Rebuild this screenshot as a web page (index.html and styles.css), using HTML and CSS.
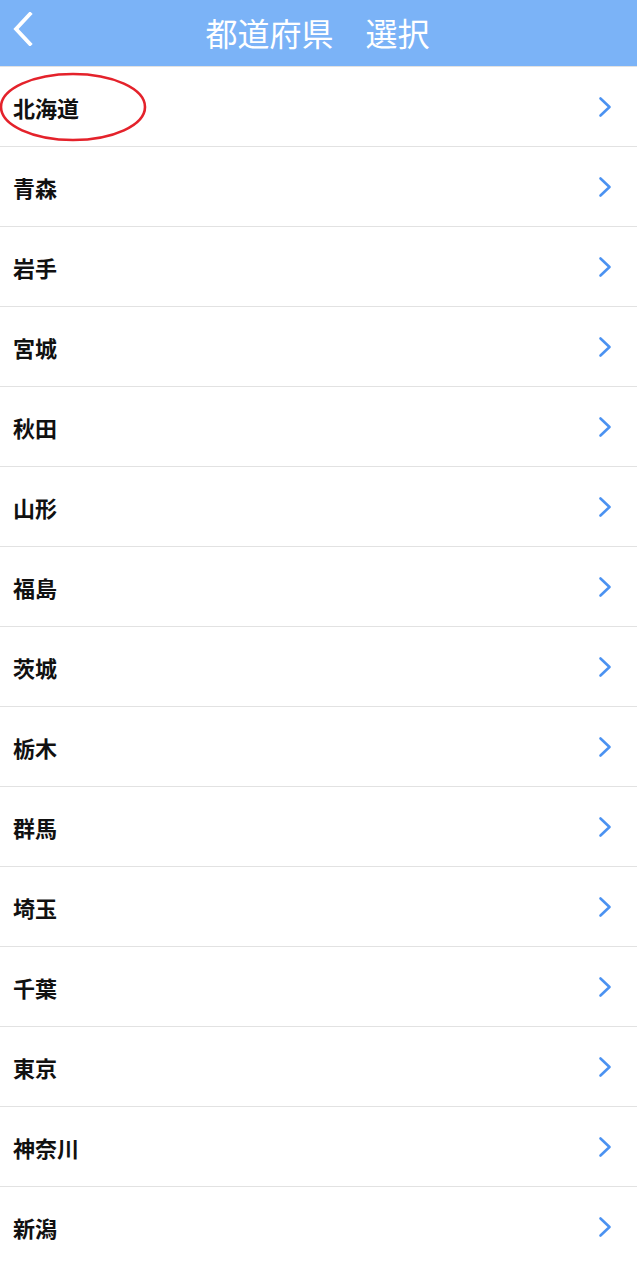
FILE: index.html
```html
<!DOCTYPE html>
<html lang="ja">
<head>
  <meta charset="UTF-8">
  <meta name="viewport" content="width=device-width, initial-scale=1.0">
  <title>都道府県選択</title>
  <link rel="stylesheet" href="styles.css">
</head>
<body>

  <!-- Header -->
  <header class="topbar">
    <a class="back" href="#">
      <svg width="22" height="34" viewBox="0 0 22 34"><path d="M18 2 L4 17 L18 32" fill="none" stroke="#fff" stroke-width="3.8" stroke-linecap="square"/></svg>
    </a>
    <h1>都道府県　選択</h1>
  </header>

  <!-- Prefecture list -->
  <ul class="pref-list">
    <li><span>北海道</span><svg class="chev" width="14" height="22" viewBox="0 0 14 22"><path d="M2.5 2.5 L11.5 11 L2.5 19.5" fill="none" stroke="#4b92f1" stroke-width="2.6" stroke-linecap="round" stroke-linejoin="round"/></svg>
      <svg class="circle" width="150" height="72" viewBox="0 0 150 72"><ellipse cx="74" cy="36" rx="72" ry="33" fill="none" stroke="#e4222b" stroke-width="2.6"/></svg>
    </li>
    <li><span>青森</span><svg class="chev" width="14" height="22" viewBox="0 0 14 22"><path d="M2.5 2.5 L11.5 11 L2.5 19.5" fill="none" stroke="#4b92f1" stroke-width="2.6" stroke-linecap="round" stroke-linejoin="round"/></svg></li>
    <li><span>岩手</span><svg class="chev" width="14" height="22" viewBox="0 0 14 22"><path d="M2.5 2.5 L11.5 11 L2.5 19.5" fill="none" stroke="#4b92f1" stroke-width="2.6" stroke-linecap="round" stroke-linejoin="round"/></svg></li>
    <li><span>宮城</span><svg class="chev" width="14" height="22" viewBox="0 0 14 22"><path d="M2.5 2.5 L11.5 11 L2.5 19.5" fill="none" stroke="#4b92f1" stroke-width="2.6" stroke-linecap="round" stroke-linejoin="round"/></svg></li>
    <li><span>秋田</span><svg class="chev" width="14" height="22" viewBox="0 0 14 22"><path d="M2.5 2.5 L11.5 11 L2.5 19.5" fill="none" stroke="#4b92f1" stroke-width="2.6" stroke-linecap="round" stroke-linejoin="round"/></svg></li>
    <li><span>山形</span><svg class="chev" width="14" height="22" viewBox="0 0 14 22"><path d="M2.5 2.5 L11.5 11 L2.5 19.5" fill="none" stroke="#4b92f1" stroke-width="2.6" stroke-linecap="round" stroke-linejoin="round"/></svg></li>
    <li><span>福島</span><svg class="chev" width="14" height="22" viewBox="0 0 14 22"><path d="M2.5 2.5 L11.5 11 L2.5 19.5" fill="none" stroke="#4b92f1" stroke-width="2.6" stroke-linecap="round" stroke-linejoin="round"/></svg></li>
    <li><span>茨城</span><svg class="chev" width="14" height="22" viewBox="0 0 14 22"><path d="M2.5 2.5 L11.5 11 L2.5 19.5" fill="none" stroke="#4b92f1" stroke-width="2.6" stroke-linecap="round" stroke-linejoin="round"/></svg></li>
    <li><span>栃木</span><svg class="chev" width="14" height="22" viewBox="0 0 14 22"><path d="M2.5 2.5 L11.5 11 L2.5 19.5" fill="none" stroke="#4b92f1" stroke-width="2.6" stroke-linecap="round" stroke-linejoin="round"/></svg></li>
    <li><span>群馬</span><svg class="chev" width="14" height="22" viewBox="0 0 14 22"><path d="M2.5 2.5 L11.5 11 L2.5 19.5" fill="none" stroke="#4b92f1" stroke-width="2.6" stroke-linecap="round" stroke-linejoin="round"/></svg></li>
    <li><span>埼玉</span><svg class="chev" width="14" height="22" viewBox="0 0 14 22"><path d="M2.5 2.5 L11.5 11 L2.5 19.5" fill="none" stroke="#4b92f1" stroke-width="2.6" stroke-linecap="round" stroke-linejoin="round"/></svg></li>
    <li><span>千葉</span><svg class="chev" width="14" height="22" viewBox="0 0 14 22"><path d="M2.5 2.5 L11.5 11 L2.5 19.5" fill="none" stroke="#4b92f1" stroke-width="2.6" stroke-linecap="round" stroke-linejoin="round"/></svg></li>
    <li><span>東京</span><svg class="chev" width="14" height="22" viewBox="0 0 14 22"><path d="M2.5 2.5 L11.5 11 L2.5 19.5" fill="none" stroke="#4b92f1" stroke-width="2.6" stroke-linecap="round" stroke-linejoin="round"/></svg></li>
    <li><span>神奈川</span><svg class="chev" width="14" height="22" viewBox="0 0 14 22"><path d="M2.5 2.5 L11.5 11 L2.5 19.5" fill="none" stroke="#4b92f1" stroke-width="2.6" stroke-linecap="round" stroke-linejoin="round"/></svg></li>
    <li><span>新潟</span><svg class="chev" width="14" height="22" viewBox="0 0 14 22"><path d="M2.5 2.5 L11.5 11 L2.5 19.5" fill="none" stroke="#4b92f1" stroke-width="2.6" stroke-linecap="round" stroke-linejoin="round"/></svg></li>
  </ul>

</body>
</html>
```

FILE: styles.css
```css
body { margin: 0; padding: 0; background-color: #fff; font-family: "Noto Sans CJK JP", "Noto Sans", sans-serif; }
.topbar { height: 67px; background-color: #7bb3f7; border-bottom: 1px solid #e2e2e2; display: flex; align-items: center; justify-content: center; position: relative; box-sizing: border-box; }
.topbar h1 { margin: 0 0 3px -2px; color: #fff; font-size: 32px; font-weight: 400; line-height: 1; }
.back { position: absolute; left: 12px; top: 12px; display: block; }
.back svg { display: block; }
.pref-list { list-style: none; margin: 0; padding: 0; }
.pref-list li { height: 79px; border-bottom: 1px solid #e2e2e2; display: flex; align-items: center; justify-content: space-between; padding: 0 25px 0 13px; position: relative; }
.pref-list li:last-child { border-bottom: none; }
.pref-list li span { font-size: 22px; font-weight: 700; color: #111; }
.chev { display: block; }
.circle { position: absolute; left: -1px; top: 4px; }
```
